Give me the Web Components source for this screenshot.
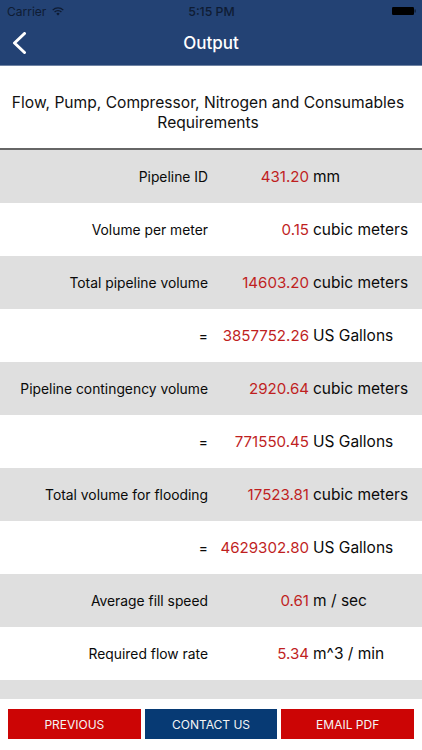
<!DOCTYPE html>
<html>
<head>
<meta charset="utf-8">
<title>Output</title>
<style>
  html, body { margin: 0; padding: 0; }
  body { width: 422px; height: 750px; overflow: hidden; font-family: Inter, "Liberation Sans", sans-serif; }
</style>
</head>
<body>
<output-screen>
  <status-bar slot="top"></status-bar>
  <nav-bar slot="top">Output</nav-bar>
  <section-title slot="top">Flow, Pump, Compressor, Nitrogen and Consumables Requirements</section-title>

  <result-row label="Pipeline ID" value="431.20" unit="mm"></result-row>
  <result-row label="Volume per meter" value="0.15" unit="cubic meters"></result-row>
  <result-row label="Total pipeline volume" value="14603.20" unit="cubic meters"></result-row>
  <result-row label="=" value="3857752.26" unit="US Gallons"></result-row>
  <result-row label="Pipeline contingency volume" value="2920.64" unit="cubic meters"></result-row>
  <result-row label="=" value="771550.45" unit="US Gallons"></result-row>
  <result-row label="Total volume for flooding" value="17523.81" unit="cubic meters"></result-row>
  <result-row label="=" value="4629302.80" unit="US Gallons"></result-row>
  <result-row label="Average fill speed" value="0.61" unit="m / sec"></result-row>
  <result-row label="Required flow rate" value="5.34" unit="m^3 / min"></result-row>
  <result-row></result-row>

  <action-button slot="actions" color="#cc0505">PREVIOUS</action-button>
  <action-button slot="actions" color="#073a74">CONTACT US</action-button>
  <action-button slot="actions" color="#cc0505">EMAIL PDF</action-button>
</output-screen>

<script>
function define(name, html) {
  customElements.define(name, class extends HTMLElement {
    constructor() {
      super();
      this.attachShadow({ mode: 'open' }).innerHTML = html;
    }
  });
}

define('output-screen', `
  <style>
    :host { display: flex; flex-direction: column; width: 422px; height: 750px; background: #fff; }
    .list { flex: 1; min-height: 0; overflow: hidden; background: #fff; }
    .list ::slotted(result-row:nth-of-type(odd)) { background: #dfdfdf; }
    footer { flex: none; display: grid; grid-template-columns: repeat(3, 1fr); gap: 4px; height: 30px; padding: 10px 8px 11px 8px; background: #fff; }
  </style>
  <slot name="top"></slot>
  <div class="list"><slot></slot></div>
  <footer><slot name="actions"></slot></footer>`);

define('status-bar', `
  <style>
    :host { display: flex; align-items: center; justify-content: space-between; height: 22px; padding: 0 6px 0 7px; background: #234274; color: #0f1c33; font-size: 12px; position: relative; }
    .left { display: flex; align-items: center; gap: 6px; }
    .time { position: absolute; left: 1px; right: 0; text-align: center; font-size: 12.3px; font-weight: 500; }
    svg { display: block; }
  </style>
  <span class="left">Carrier
    <svg width="12" height="9" viewBox="0 0 14 10" fill="none" stroke="#0f1c33" stroke-width="1.6">
      <path d="M.8 3.4a8.8 8.8 0 0 1 12.4 0"/>
      <path d="M3 5.6a5.6 5.6 0 0 1 8 0"/>
      <path d="M7 9.6 5 7.5a2.8 2.8 0 0 1 4 0z" fill="#0f1c33" stroke="none"/>
    </svg>
  </span>
  <span class="time">5:15 PM</span>
  <svg width="24" height="10" viewBox="0 0 24 10">
    <rect x="0" y="1" width="22" height="8" rx="1.2" fill="#000"/>
    <rect x="22.5" y="3.5" width="1.2" height="3" fill="#0f1c33"/>
  </svg>`);

define('nav-bar', `
  <style>
    :host { display: flex; align-items: center; justify-content: center; position: relative; height: 42px; padding-bottom: 1px; background: #234274; color: #fff; font-size: 17px; font-weight: 500; }
    svg { position: absolute; left: 11px; top: 10px; }
  </style>
  <svg width="16" height="22" viewBox="0 0 16 22" fill="none" stroke="#fff" stroke-width="3" stroke-linecap="round" stroke-linejoin="round">
    <path d="M13.5 1.5 3.5 11l10 9.5"/>
  </svg>
  <slot></slot>`);

define('section-title', `
  <style>
    :host { display: block; box-sizing: border-box; height: 85px; padding: 27px 14px 0 8px; background: #fff; border-top: 1px solid #6f83a3; border-bottom: 2px solid #666; color: #111; font-size: 15.6px; line-height: 20px; text-align: center; }
  </style>
  <slot></slot>`);

customElements.define('result-row', class extends HTMLElement {
  constructor() {
    super();
    const root = this.attachShadow({ mode: 'open' });
    root.innerHTML = `
      <style>
        :host { display: grid; grid-template-columns: 208px 97px 1fr; column-gap: 4px; align-items: center; height: 53px; color: #0a0a0a; }
        .label { font-size: 13.85px; text-align: right; white-space: nowrap; }
        .value { font-size: 15.1px; color: #bf1f1f; text-align: right; white-space: nowrap; }
        .unit { font-size: 15.5px; white-space: nowrap; }
      </style>
      <span class="label"></span><span class="value"></span><span class="unit"></span>`;
  }
  connectedCallback() {
    for (const key of ['label', 'value', 'unit']) {
      this.shadowRoot.querySelector('.' + key).textContent = this.getAttribute(key) || '';
    }
  }
});

customElements.define('action-button', class extends HTMLElement {
  constructor() {
    super();
    this.attachShadow({ mode: 'open' }).innerHTML = `
      <style>
        :host { display: flex; align-items: center; justify-content: center; color: #f4f4f4; font-size: 12px; cursor: pointer; }
      </style>
      <slot></slot>`;
  }
  connectedCallback() {
    this.style.background = this.getAttribute('color');
  }
});
</script>
</body>
</html>
